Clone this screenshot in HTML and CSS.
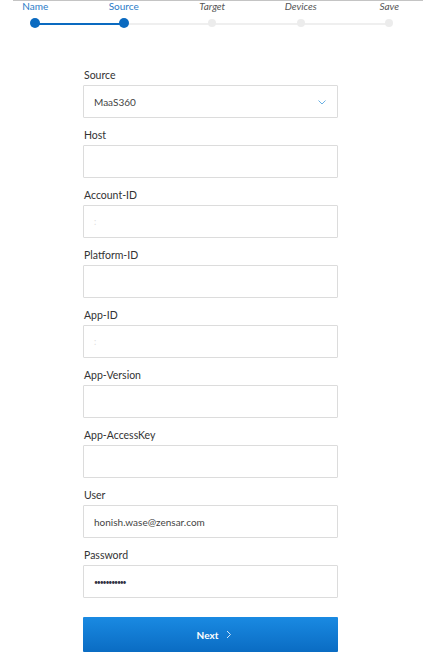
FILE: index.html
```html
<!DOCTYPE html>
<html>
<head>
<meta charset="utf-8">
<link rel="stylesheet" href="styles.css">
</head>
<body>
<div class="page">
  <div class="stepper">
    <div class="step done"><span class="step-label">Name</span><span class="dot"></span></div>
    <div class="step done current"><span class="step-label">Source</span><span class="dot"></span></div>
    <div class="step"><span class="step-label">Target</span><span class="dot"></span></div>
    <div class="step"><span class="step-label">Devices</span><span class="dot"></span></div>
    <div class="step last"><span class="step-label">Save</span><span class="dot"></span></div>
  </div>
  <form class="form">
    <div class="field">
      <label class="label">Source</label>
      <div class="input select">MaaS360
        <svg class="chev" width="8" height="5" viewBox="0 0 8 5"><path d="M0.5 0.5 L4 4 L7.5 0.5" fill="none" stroke="#6ab0e4" stroke-width="1"/></svg>
      </div>
    </div>
    <div class="field"><label class="label">Host</label><div class="input"></div></div>
    <div class="field"><label class="label">Account-ID</label><div class="input"><span class="faint">:</span></div></div>
    <div class="field"><label class="label">Platform-ID</label><div class="input"></div></div>
    <div class="field"><label class="label">App-ID</label><div class="input"><span class="faint">:</span></div></div>
    <div class="field"><label class="label">App-Version</label><div class="input"></div></div>
    <div class="field"><label class="label">App-AccessKey</label><div class="input"></div></div>
    <div class="field"><label class="label">User</label><div class="input">honish.wase@zensar.com</div></div>
    <div class="field"><label class="label">Password</label><div class="input pw">•••••••••••</div></div>
    <div class="actions">
      <div class="btn">Next <svg class="btn-chev" width="6" height="9" viewBox="0 0 6 9"><path d="M1 1 L4.5 4.5 L1 8" fill="none" stroke="#cfe4f8" stroke-width="1"/></svg></div>
    </div>
  </form>
</div>
</body>
</html>
```
FILE: styles.css
```css
html, body {
  margin: 0;
  padding: 0;
  background: #fff;
}
body {
  font-family: Lato, "Open Sans", "Liberation Sans", sans-serif;
  color: #333;
}
.page {
  width: 425px;
  height: 655px;
  overflow: hidden;
  position: relative;
}
.stepper {
  margin-left: 13px;
  width: 410px;
  border-top: 1px solid #c4c4c4;
  display: flex;
  padding-left: 0;
  height: 40px;
}
.step {
  width: 88.5px;
  flex: none;
  display: flex;
  flex-direction: column;
  align-items: center;
  position: relative;
}
.step:first-child { margin-left: -22px; }
.step-label {
  font-size: 10px;
  line-height: 11px;
  height: 11px;
  font-style: italic;
  color: #555;
  margin-top: 0px;
}
.step.done .step-label {
  font-style: normal;
  color: #2b7cc8;
}
.dot {
  margin-top: 7px;
  width: 8px;
  height: 8px;
  border-radius: 50%;
  background: #ececec;
  position: relative;
  z-index: 2;
}
.step.done .dot {
  width: 10px;
  height: 10px;
  margin-top: 6px;
  background: #0a6ac0;
}
.step::after {
  content: "";
  position: absolute;
  left: 50%;
  width: 100%;
  top: 22px;
  height: 2px;
  background: #efefef;
  z-index: 1;
}
.step.done::after { background: #0a6ac0; }
.step.current::after { background: #efefef; }
.step.last::after { display: none; }

.form {
  margin: 28px 0 0 83px;
  width: 255px;
  display: flex;
  flex-direction: column;
}
.field {
  display: flex;
  flex-direction: column;
  height: 60px;
}
.label {
  font-size: 10.5px;
  line-height: 12px;
  color: #333;
  margin-left: 1px;
  height: 16px;
}
.input {
  box-sizing: border-box;
  height: 33px;
  border: 1px solid #dcdcdc;
  border-radius: 1px;
  font-size: 10px;
  color: #444;
  padding: 0 10px;
  display: flex;
  align-items: center;
  position: relative;
}
.select .chev {
  position: absolute;
  right: 11px;
  top: 14px;
}
.faint { color: #ddd; font-size: 9px; }
.pw { font-size: 7px; letter-spacing: -1.2px; color: #334; padding-top: 1px; }
.actions { margin-top: 8px; }
.btn {
  box-sizing: border-box;
  height: 35px;
  background: linear-gradient(#1a8ae2, #0a6cc3);
  color: #fff;
  font-size: 10px;
  font-weight: bold;
  display: flex;
  align-items: center;
  justify-content: center;
  gap: 8px;
  border-radius: 1px;
  padding-left: 8px;
}
```
